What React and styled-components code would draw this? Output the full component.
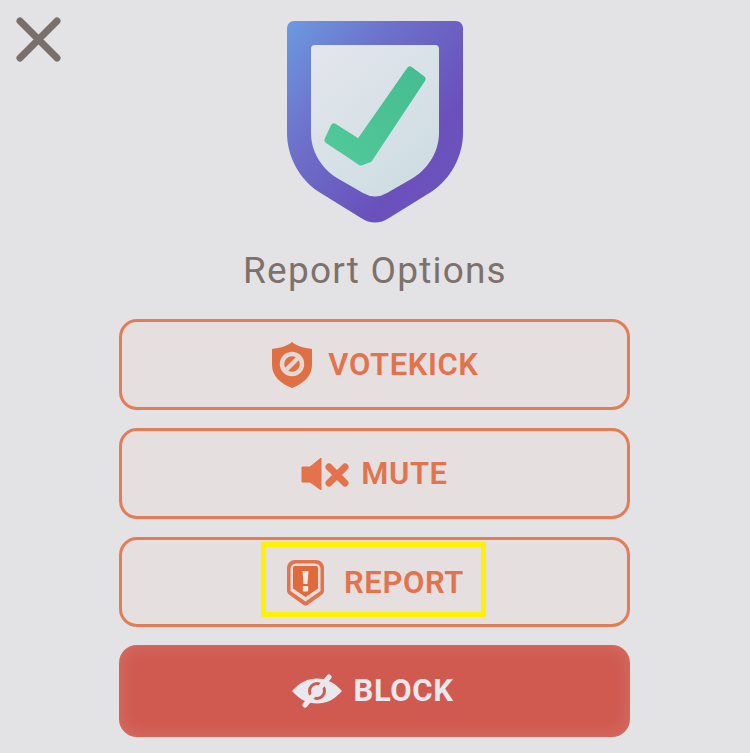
import React from "react";
import styled, { createGlobalStyle } from "styled-components";

const Global = createGlobalStyle`
  html, body { margin: 0; padding: 0; background: #e3e3e6; }
`;

const Screen = styled.main`
  position: relative;
  width: 750px;
  height: 753px;
  overflow: hidden;
  padding-top: 21px;
  box-sizing: border-box;
  display: flex;
  flex-direction: column;
  align-items: center;
  background: #e3e3e6;
  font-family: Roboto, "Liberation Sans", sans-serif;
`;

const Close = styled.button`
  position: absolute;
  left: 14px;
  top: 15px;
  width: 50px;
  height: 50px;
  padding: 0;
  border: 0;
  background: none;
  display: block;
`;

const Title = styled.h1`
  margin: 26px 0 27px;
  font-size: 37px;
  line-height: 42px;
  font-weight: 400;
  letter-spacing: 1.2px;
  color: #7d716b;
`;

const Actions = styled.div`
  width: 511px;
  margin-right: 1px;
  display: flex;
  flex-direction: column;
  gap: 18px;
`;

const Action = styled.button`
  height: ${p => p.$h || 91}px;
  box-sizing: border-box;
  padding: 0 ${p => p.$padRight || 0}px 0 ${p => p.$padLeft || 0}px;
  display: flex;
  align-items: center;
  justify-content: center;
  gap: ${p => p.$gap || 0}px;
  border-radius: 18px;
  font: ${p => (p.$solid ? 700 : 600)} 31px/36px Roboto, "Liberation Sans", sans-serif;
  letter-spacing: 0.6px;
  border: ${p => (p.$solid ? "0" : "3px solid #e37d58")};
  background: ${p => (p.$solid ? "#d05a50" : "#e5dfdf")};
  color: ${p => (p.$solid ? "#e9e8ed" : "#e2734c")};
  box-shadow: ${p => (p.$solid ? "inset 0 0 18px rgba(255,255,255,.14)" : "none")};
`;

const Highlight = styled.span`
  width: 225px;
  height: 75px;
  margin: 0 2px 5px 0;
  padding: 7px 0 0 4px;
  box-sizing: border-box;
  border: 5px solid #fff200;
  display: flex;
  align-items: center;
  justify-content: center;
  gap: 20px;
`;

const Logo = () => (
  <svg width="176" height="203" viewBox="0 0 176 203" style={{ display: "block", filter: "blur(0.4px)" }}>
    <defs>
      <linearGradient id="sh" x1="0" y1="0" x2="1" y2="0.9">
        <stop offset="0" stopColor="#6c9adf" />
        <stop offset="0.35" stopColor="#6d70c9" />
        <stop offset="0.75" stopColor="#6a50bb" />
        <stop offset="1" stopColor="#6c55bd" />
      </linearGradient>
      <linearGradient id="in" x1="0.1" y1="0" x2="0.8" y2="1">
        <stop offset="0" stopColor="#e3e6ec" />
        <stop offset="1" stopColor="#cddde2" />
      </linearGradient>
      <linearGradient id="ck" x1="0" y1="1" x2="1" y2="0">
        <stop offset="0" stopColor="#52c99a" />
        <stop offset="1" stopColor="#45bd90" />
      </linearGradient>
    </defs>
    <path
      d="M7 0H169a7 7 0 0 1 7 7V112C176 135 164 158 144 171L102 197Q88 206 74 197L32 171C12 158 0 135 0 112V7A7 7 0 0 1 7 0Z"
      fill="url(#sh)"
    />
    <path
      d="M28 24H148a4 4 0 0 1 4 4V112C152 130 142 147 126 157L100 172Q88 179 76 172L50 157C34 147 24 130 24 112V28A4 4 0 0 1 28 24Z"
      fill="url(#in)"
    />
    <path
      d="M47 106L72 122L123 49L135 58L82 138L74 141L41 119Z"
      fill="url(#ck)"
      stroke="url(#ck)"
      strokeWidth="7"
      strokeLinejoin="round"
    />
  </svg>
);

const CloseIcon = () => (
  <svg width="50" height="50" viewBox="0 0 50 50" style={{ display: "block" }}>
    <path d="M6 6L43 43M43 6L6 43" stroke="#7a706b" strokeWidth="7" strokeLinecap="round" />
  </svg>
);

const VotekickIcon = () => (
  <svg width="40" height="46" viewBox="0 0 40 46">
    <path
      d="M20 0C25 4 32 6 40 7V23C40 34 31 42 20 46C9 42 0 34 0 23V7C8 6 15 4 20 0Z"
      fill="#e06f43"
    />
    <circle cx="20" cy="22" r="10" fill="none" stroke="#e8d8d3" strokeWidth="4.5" />
    <path d="M14 28L26 16" stroke="#e8d8d3" strokeWidth="4.5" />
  </svg>
);

const MuteIcon = () => (
  <svg width="48" height="32" viewBox="0 0 48 32">
    <path d="M1 9H9L20 0V32L9 24H1Z" fill="#e2734c" stroke="#e2734c" strokeWidth="1" strokeLinejoin="round" />
    <path d="M28 9L44 25M44 9L28 25" stroke="#e2734c" strokeWidth="7" strokeLinecap="round" />
  </svg>
);

const ReportIcon = () => (
  <svg width="37" height="46" viewBox="0 0 37 46">
    <path
      d="M8 0H29A8 8 0 0 1 37 8V31Q37 33 35 34.500L20.500 45Q18.500 46 16.500 45L2 34.500Q0 33 0 31V8A8 8 0 0 1 8 0Z"
      fill="#e2734c"
    />
    <path
      d="M9 3.500H28A5.500 5.500 0 0 1 33.500 9V31L18.500 41.500L3.500 31V9A5.500 5.500 0 0 1 9 3.500Z"
      fill="#e8dcd8"
    />
    <path d="M8 6H29A2 2 0 0 1 31 8V28.500L18.500 37L6 28.500V8A2 2 0 0 1 8 6Z" fill="#e06a3a" />
    <path d="M15.500 11H21.500L20.500 24H16.500Z" fill="#f1e9e6" />
    <rect x="15.800" y="26" width="5.400" height="5.400" rx="0.800" fill="#f1e9e6" />
  </svg>
);

const EyeOffIcon = () => (
  <svg width="50" height="34" viewBox="0 0 50 34">
    <path d="M0 17C8 8 16 4.500 25 4.500C34 4.500 42 8 50 17C42 26 34 29.500 25 29.500C16 29.500 8 26 0 17Z" fill="#e9e8ed" />
    <circle cx="25" cy="17" r="7.500" fill="none" stroke="#d05a50" strokeWidth="3" />
    <path d="M13 31L37 3" stroke="#e9e8ed" strokeWidth="5" strokeLinecap="round" />
  </svg>
);

export default function App() {
  return (
    <Screen>
      <Global />
      <Close aria-label="Close"><CloseIcon /></Close>
      <Logo />
      <Title>Report Options</Title>
      <Actions>
        <Action $gap={16} $padLeft={2}><VotekickIcon />VOTEKICK</Action>
        <Action $gap={12}><MuteIcon />MUTE</Action>
        <Action $h={90}><Highlight><ReportIcon />REPORT</Highlight></Action>
        <Action $solid $gap={12} $h={92} $padRight={4}><EyeOffIcon />BLOCK</Action>
      </Actions>
    </Screen>
  );
}
